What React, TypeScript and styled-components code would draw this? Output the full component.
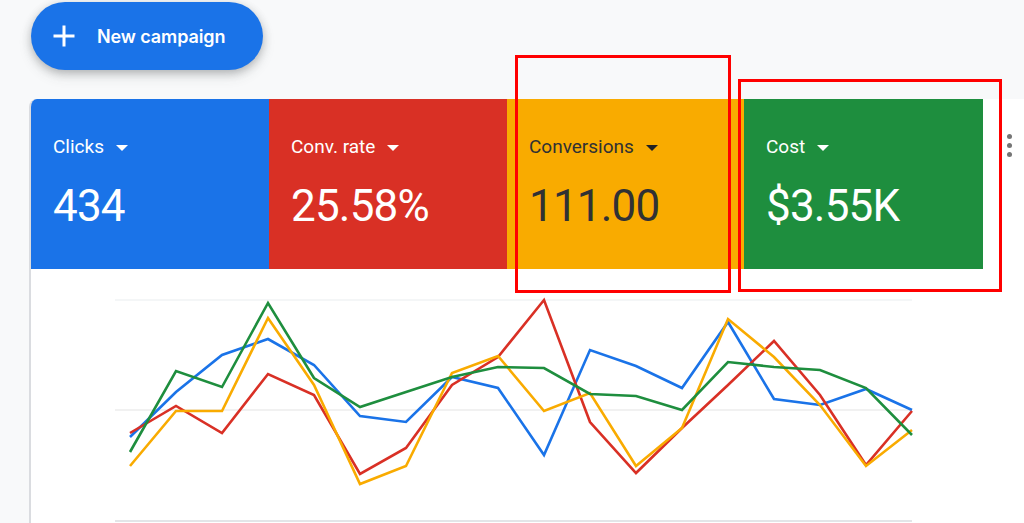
import React from "react";
import styled, { createGlobalStyle } from "styled-components";

const GlobalStyle = createGlobalStyle`
  html, body {
    margin: 0;
    padding: 0;
    background: #f8f9fa;
    overflow: hidden;
  }
  * {
    box-sizing: border-box;
  }
`;

const colors = {
  blue: "#1a73e8",
  red: "#d93025",
  yellow: "#f9ab00",
  green: "#1e8e3e",
};

interface IMetric {
  label: string;
  value: string;
  bg: string;
  dark?: boolean;
}

const metrics: IMetric[] = [
  { label: "Clicks", value: "434", bg: colors.blue },
  { label: "Conv. rate", value: "25.58%", bg: colors.red },
  { label: "Conversions", value: "111.00", bg: colors.yellow, dark: true },
  { label: "Cost", value: "$3.55K", bg: colors.green },
];

// chart points, x from 130 step 46 (page coords)
const series = [
  {
    color: "#1a73e8",
    ys: [437, 392, 355, 339, 365, 416, 422, 377, 388, 455, 350, 366, 388, 322, 399, 405, 389, 410],
  },
  {
    color: "#d93025",
    ys: [433, 406, 433, 374, 395, 474, 448, 385, 357, 300, 422, 473, 428, 385, 341, 395, 465, 411],
  },
  {
    color: "#f9ab00",
    ys: [466, 411, 411, 318, 385, 484, 466, 373, 356, 411, 393, 466, 428, 319, 357, 405, 466, 430],
  },
  {
    color: "#1e8e3e",
    ys: [452, 371, 387, 303, 378, 407, 392, 377, 367, 368, 394, 396, 410, 362, 367, 370, 388, 435],
  },
];

const Page = styled.div`
  position: relative;
  width: 1024px;
  height: 523px;
  padding: 2px 0 0 29px;
  display: flex;
  flex-direction: column;
  overflow: hidden;
  font-family: Roboto, "Liberation Sans", Arial, sans-serif;
`;

const Header = styled.div`
  height: 97px;
  flex-shrink: 0;
  display: flex;
  align-items: flex-start;
`;

const NewButton = styled.button`
  margin-left: 2px;
  width: 232px;
  height: 68px;
  border: none;
  border-radius: 34px;
  background: ${colors.blue};
  color: #fff;
  display: flex;
  align-items: center;
  gap: 21px;
  padding: 0 0 0 21px;
  font-family: Inter, Roboto, sans-serif;
  font-weight: 600;
  font-size: 18px;
  letter-spacing: -0.1px;
  box-shadow: 0 3px 8px rgba(60, 64, 67, 0.3), 0 6px 14px rgba(60, 64, 67, 0.12);
  cursor: pointer;
`;

const Card = styled.div`
  flex: 1;
  min-height: 0;
  background: #fff;
  border-left: 2px solid #dadce0;
  border-top-left-radius: 8px;
  display: flex;
  flex-direction: column;
  overflow: hidden;
`;

const TileRow = styled.div`
  height: 170px;
  flex-shrink: 0;
  display: flex;
`;

const Tile = styled.div<{ $bg: string; $dark?: boolean; $w: number }>`
  width: ${(p) => p.$w}px;
  background: ${(p) => p.$bg};
  color: ${(p) => (p.$dark ? "#303134" : "#fff")};
  padding: 36px 0 0 22px;
  display: flex;
  flex-direction: column;
`;

const Label = styled.div`
  display: flex;
  align-items: center;
  gap: 12px;
  font-size: 19px;
  line-height: 24px;
`;

const Caret = styled.span<{ $dark?: boolean }>`
  width: 0;
  height: 0;
  border-left: 6px solid transparent;
  border-right: 6px solid transparent;
  border-top: 6px solid ${(p) => (p.$dark ? "#202124" : "#fff")};
  margin-top: 2px;
`;

const Value = styled.div`
  margin-top: 22px;
  font-size: 44px;
  line-height: 50px;
  letter-spacing: -0.8px;
`;

const MoreCell = styled.div`
  flex: 1;
  display: flex;
  flex-direction: column;
  align-items: center;
  padding: 35px 0 0 12px;
  gap: 4px;
`;

const Dot = styled.span`
  width: 5px;
  height: 5px;
  border-radius: 50%;
  background: #757575;
`;

const ChartArea = styled.div`
  flex: 1;
  svg {
    display: block;
  }
`;

const Highlight = styled.div<{ $l: number; $t: number; $w: number; $h: number }>`
  position: absolute;
  left: ${(p) => p.$l}px;
  top: ${(p) => p.$t}px;
  width: ${(p) => p.$w}px;
  height: ${(p) => p.$h}px;
  border: 3px solid #ff0000;
  pointer-events: none;
`;

const tileWidths = [238, 238, 237, 239];

const Chart: React.FC = () => {
  // local coords: page x - 31, page y - 269
  const ox = 31;
  const oy = 269;
  return (
    <svg width="993" height="254" viewBox="0 0 993 254">
      <line x1={115 - ox} x2={912 - ox} y1={300 - oy} y2={300 - oy} stroke="#f1f3f4" strokeWidth="1.5" />
      <line x1={115 - ox} x2={912 - ox} y1={410 - oy} y2={410 - oy} stroke="#ececec" strokeWidth="1.5" />
      <line x1={115 - ox} x2={912 - ox} y1={521 - oy} y2={521 - oy} stroke="#dadce0" strokeWidth="1.5" />
      {series.map((s) => (
        <polyline
          key={s.color}
          fill="none"
          stroke={s.color}
          strokeWidth="2.6"
          strokeLinejoin="miter"
          points={s.ys.map((y, i) => `${130 + i * 46 - ox},${y - oy}`).join(" ")}
        />
      ))}
    </svg>
  );
};

const App: React.FC = () => {
  return (
    <>
      <GlobalStyle />
      <Page>
        <Header>
          <NewButton>
            <svg width="24" height="24" viewBox="0 0 24 24">
              <path d="M12 1.5v21M1.5 12h21" stroke="#fff" strokeWidth="3" fill="none" />
            </svg>
            <span>New campaign</span>
          </NewButton>
        </Header>
        <Card>
          <TileRow>
            {metrics.map((m, i) => (
              <Tile key={m.label} $bg={m.bg} $dark={m.dark} $w={tileWidths[i]}>
                <Label>
                  <span>{m.label}</span>
                  <Caret $dark={m.dark} />
                </Label>
                <Value>{m.value}</Value>
              </Tile>
            ))}
            <MoreCell>
              <Dot />
              <Dot />
              <Dot />
            </MoreCell>
          </TileRow>
          <ChartArea>
            <Chart />
          </ChartArea>
        </Card>
        <Highlight $l={515} $t={55} $w={216} $h={238} />
        <Highlight $l={738} $t={79} $w={264} $h={213} />
      </Page>
    </>
  );
};

export default App;
